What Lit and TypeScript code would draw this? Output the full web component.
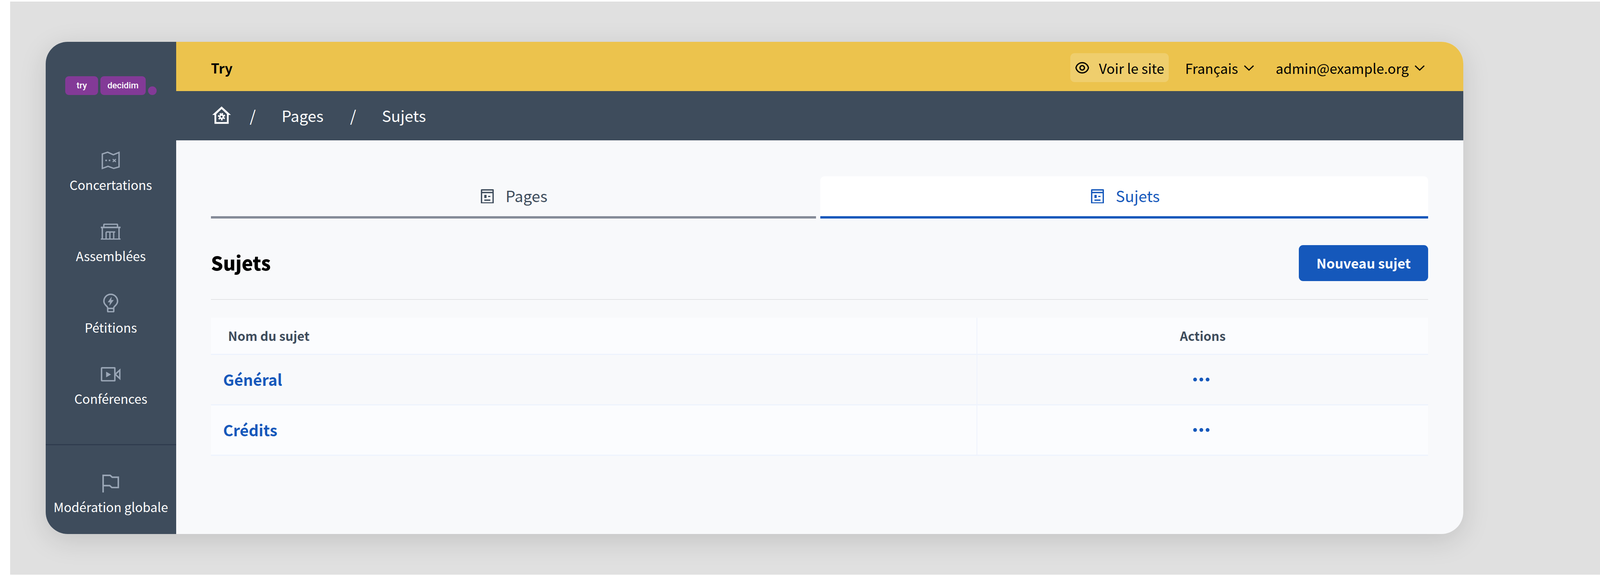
import { LitElement, html, css, svg } from "lit";
import { customElement } from "lit/decorators.js";

const pageIcon = html`<svg class="page-ic" viewBox="0 0 34 38"><path fill="currentColor" fill-rule="evenodd" d="M2 0H32a2 2 0 0 1 2 2V36a2 2 0 0 1-2 2H2a2 2 0 0 1-2-2V2a2 2 0 0 1 2-2ZM3.5 3.5V7H30.5V3.5ZM3.5 10.5V34.5H30.5V10.5ZM9 15H15V23H9ZM19 17.5H25V20.5H19ZM9 27H25V30.5H9Z"/></svg>`;
const chevron = html`<svg class="chev" viewBox="0 0 24 24"><path fill="none" stroke="currentColor" stroke-width="1.5" d="M6 9.3L12 15L18 9.3"/></svg>`;
const dots = html`<svg class="dots" viewBox="0 0 44 10"><circle cx="5.5" cy="5" r="5" fill="currentColor"/><circle cx="22" cy="5" r="5" fill="currentColor"/><circle cx="38.5" cy="5" r="5" fill="currentColor"/></svg>`;

const navIcons = {
  map: svg`<svg class="i48" viewBox="0 0 48 47" fill="none" stroke="#9aa6b6" stroke-width="3.6"><path d="M2 7L16 2.5L31 9L46 3V41L32 45L17 39.5L2 45Z"/><path stroke-width="3" d="M29.5 20.5L37.5 28M37.5 20.5L29.5 28"/><rect x="10" y="22" width="4" height="4" fill="#9aa6b6" stroke="none"/><rect x="19" y="22" width="4" height="4" fill="#9aa6b6" stroke="none"/></svg>`,
  assembly: svg`<svg class="i52" viewBox="0 0 52 43" fill="none" stroke="#9aa6b6" stroke-width="3.6"><path d="M8 10V3.5a2 2 0 0 1 2-2H42a2 2 0 0 1 2 2V10"/><path d="M0 10H52M0 41H52" stroke-width="4"/><path d="M4 10V41M48 10V41"/><path d="M14 22V41M24 22V41M34 22V41M14 22H38" stroke-width="3.4"/></svg>`,
  bulb: svg`<svg class="i40" viewBox="0 0 40 50" fill="none" stroke="#9aa6b6" stroke-width="3.8"><path d="M12 37.5C12 33 2 30 2 20A18 18 0 0 1 38 20C38 30 28 33 28 37.5V46a2 2 0 0 1-2 2H14a2 2 0 0 1-2-2Z"/><path d="M12 39H28"/><path fill="#9aa6b6" stroke="none" d="M22.5 8L12 23H18L16.5 32L28 17H21.5Z"/></svg>`,
  camera: svg`<svg class="i52" viewBox="0 0 52 38" fill="none" stroke="#9aa6b6" stroke-width="3.8"><rect x="2" y="2" width="35" height="34" rx="1"/><path d="M38 19L50 8V30Z"/><path fill="#9aa6b6" stroke="none" d="M14 12L27 19.5L14 27Z"/></svg>`,
  flag: svg`<svg class="i44" viewBox="0 0 44 47" fill="none" stroke="#9aa6b6" stroke-width="4"><path d="M2 47V2H20.5L26 7H42V34H25L19.5 29H2" /></svg>`,
};

const navItem = (icon: unknown, label: string) => html`<div class="nav-item"><span class="nav-ic">${icon}</span><span class="nav-lb">${label}</span></div>`;

@customElement("app-root")
export class AppRoot extends LitElement {
  static styles = css`
    :host { display: block; font-family: "Noto Sans CJK SC", "Noto Sans", sans-serif; --u: calc(100vw / 4209); }
    * { box-sizing: border-box; }
    .page { background: #fff; padding: 4px 0 29px calc(var(--u) * 27); height: 1499px; }
    .stage { background: #e0e0e0; height: 1466px; padding: 103px calc(var(--u) * 360) 0 calc(var(--u) * 93); }
    .card { display: grid; grid-template-columns: calc(var(--u) * 343) 1fr; height: 1259px; border-radius: 56px; overflow: hidden; background: #f8f9fb; box-shadow: 0 16px 70px rgba(0,0,0,.13); }
    .side { background: #3e4c5c; color: #fff; display: flex; flex-direction: column; }
    .logo { display: flex; align-items: flex-end; gap: calc(var(--u) * 6); height: 136px; padding: 88px 0 0 calc(var(--u) * 52); font-family: Roboto, sans-serif; font-weight: 500; font-size: calc(var(--u) * 23); }
    .pill { background: #833a97; border-radius: 9px; height: 48px; display: flex; align-items: center; justify-content: center; line-height: 1; padding-bottom: 2px; }
    .p1 { width: calc(var(--u) * 86); }
    .p2 { width: calc(var(--u) * 119); }
    .dot { width: calc(var(--u) * 22); height: 22px; border-radius: 50%; background: #833a97; margin-left: calc(var(--u) * 1); }
    .nav { display: flex; flex-direction: column; padding-top: 139px; }
    .nav-item { height: 182.5px; display: flex; flex-direction: column; align-items: center; }
    .nav-ic { height: 56px; display: flex; align-items: center; justify-content: center; }
    .nav-ic svg { display: block; }
    .i48 { width: calc(var(--u) * 48); }
    .i52 { width: calc(var(--u) * 52); }
    .i40 { width: calc(var(--u) * 40); }
    .i44 { width: calc(var(--u) * 44); }
    .nav-lb { font-size: calc(var(--u) * 33.3); line-height: 56px; margin-top: 5.5px; white-space: nowrap; }
    .side-foot { margin-top: auto; height: 230px; border-top: 3px solid #2f3c4e; padding-top: 70px; }
    .side-foot .nav-lb { margin-top: 2.5px; }
    .main { display: flex; flex-direction: column; min-width: 0; }
    .topbar { height: 126px; background: #ecc34d; color: #000; display: flex; align-items: center; padding: 6px calc(var(--u) * 90) 0 calc(var(--u) * 92); font-size: calc(var(--u) * 36); }
    .brand { font-weight: 600; font-size: calc(var(--u) * 35.5); margin-right: auto; }
    .see { display: flex; align-items: center; height: 74px; background: #efce6d; border-radius: 11px; padding: 0 calc(var(--u) * 12) 0 calc(var(--u) * 11); gap: calc(var(--u) * 24); }
    .see svg { width: calc(var(--u) * 40); display: block; }
    .menu { display: flex; align-items: center; margin-left: calc(var(--u) * 46); }
    .see + .menu { margin-left: calc(var(--u) * 43); }
    .chev { width: calc(var(--u) * 48); display: block; margin-left: calc(var(--u) * 5); }
    .crumbs { height: 126px; background: #3e4c5c; color: #fff; display: flex; align-items: center; padding: 0 0 4px calc(var(--u) * 92); font-size: calc(var(--u) * 40.5); }
    .crumbs svg { width: calc(var(--u) * 56); display: block; margin-top: 4px; }
    .sep { margin-left: calc(var(--u) * 70); margin-right: calc(var(--u) * 68); }
    .sep.first { margin-left: calc(var(--u) * 46); }
    .body { padding: 92px calc(var(--u) * 92) 0; }
    .tabs { display: grid; grid-template-columns: calc(var(--u) * 1592) 1fr; gap: calc(var(--u) * 11); height: 108px; }
    .tab { display: flex; align-items: center; justify-content: center; gap: calc(var(--u) * 31); font-size: calc(var(--u) * 40.5); color: #3e4c5c; border-bottom: 6px solid #858b98; border-radius: 11px 11px 0 0; padding-left: calc(var(--u) * 3); }
    .tab span { margin-top: -5px; }
    .tab.on { background: #fff; color: #1558bb; border-bottom-color: #1558bb; padding-left: calc(var(--u) * 6); }
    .page-ic { width: calc(var(--u) * 34); display: block; }
    .title-row { height: 208px; display: flex; align-items: center; justify-content: space-between; border-bottom: 2px solid #e3e5e7; padding-top: 22px; }
    h1 { margin: 0 0 4px; font-size: calc(var(--u) * 50); font-weight: 900; color: #000; line-height: 1; }
    .btn { width: calc(var(--u) * 340); height: 92px; background: #1558bb; color: #fff; font-size: calc(var(--u) * 35.3); font-weight: 600; border-radius: 11px; display: flex; align-items: center; justify-content: center; padding-bottom: 3px; }
    .table { margin-top: 46px; }
    .row { display: grid; grid-template-columns: calc(var(--u) * 2016) 1fr; height: 129px; border-bottom: 3px solid #eef3fd; background: #fbfcfe; }
    .row.head { height: 95px; font-size: calc(var(--u) * 33); font-weight: 600; color: #3e4c5c; }
    .row.plain { background: #f8f9fb; }
    .cell { display: flex; align-items: center; }
    .cell.name { border-right: 2px solid #eef3fd; padding-left: calc(var(--u) * 32); }
    .row.head .cell { padding-bottom: 2px; }
    .row.head .cell.name { padding-left: calc(var(--u) * 45); }
    .cell.act { justify-content: center; color: #1558bb; }
    .row.head .cell.act { color: #3e4c5c; }
    .dots { width: calc(var(--u) * 44); display: block; margin-right: calc(var(--u) * 7); }
    .link { font-size: calc(var(--u) * 40.6); font-weight: 600; color: #1558bb; margin-bottom: 4px; }
  `;

  render() {
    return html`<div class="page"><div class="stage"><div class="card">
      <aside class="side">
        <div class="logo"><span class="pill p1">try</span><span class="pill p2">decidim</span><span class="dot"></span></div>
        <div class="nav">
          ${navItem(navIcons.map, "Concertations")}
          ${navItem(navIcons.assembly, "Assemblées")}
          ${navItem(navIcons.bulb, "Pétitions")}
          ${navItem(navIcons.camera, "Conférences")}
        </div>
        <div class="side-foot">${navItem(navIcons.flag, "Modération globale")}</div>
      </aside>
      <div class="main">
        <div class="topbar">
          <span class="brand">Try</span>
          <span class="see"><svg viewBox="0 0 24 24"><path fill="currentColor" fill-rule="evenodd" d="M12 3C17.39 3 21.88 6.88 22.82 12C21.88 17.12 17.39 21 12 21C6.61 21 2.12 17.12 1.18 12C2.12 6.88 6.61 3 12 3ZM12 19C16.2 19 19.79 16.11 20.8 12C19.79 7.89 16.2 5 12 5C7.8 5 4.21 7.89 3.2 12C4.21 16.11 7.8 19 12 19ZM12 16.5C9.51 16.5 7.5 14.49 7.5 12C7.5 9.51 9.51 7.5 12 7.5C14.49 7.5 16.5 9.51 16.5 12C16.5 14.49 14.49 16.5 12 16.5ZM12 14.5C13.38 14.5 14.5 13.38 14.5 12C14.5 10.62 13.38 9.5 12 9.5C10.62 9.5 9.5 10.62 9.5 12C9.5 13.38 10.62 14.5 12 14.5Z"/></svg>Voir le site</span>
          <span class="menu">Français${chevron}</span>
          <span class="menu">admin@example.org${chevron}</span>
        </div>
        <div class="crumbs">
          <svg viewBox="0 0 24 24" fill="none" stroke="currentColor"><path stroke-width="2" d="M5 20V9.6L12 3L19 9.6V20H5Z"/><path fill="currentColor" stroke="none" d="M1.5 11L12 1.4L22.5 11H19.5L12 4.2L4.5 11Z"/><circle cx="12" cy="13" r="2" stroke-width="1.7"/><path stroke-width="1.6" stroke-dasharray="1.7 1.45" d="M12 9.6A3.4 3.4 0 1 1 11.99 9.6"/></svg>
          <span class="sep first">/</span><span>Pages</span><span class="sep">/</span><span>Sujets</span>
        </div>
        <div class="body">
          <div class="tabs">
            <div class="tab">${pageIcon}<span>Pages</span></div>
            <div class="tab on">${pageIcon}<span>Sujets</span></div>
          </div>
          <div class="title-row"><h1>Sujets</h1><div class="btn">Nouveau sujet</div></div>
          <div class="table">
            <div class="row head"><div class="cell name">Nom du sujet</div><div class="cell act">Actions</div></div>
            <div class="row plain"><div class="cell name"><span class="link">Général</span></div><div class="cell act">${dots}</div></div>
            <div class="row"><div class="cell name"><span class="link">Crédits</span></div><div class="cell act">${dots}</div></div>
          </div>
        </div>
      </div>
    </div></div></div>`;
  }
}
